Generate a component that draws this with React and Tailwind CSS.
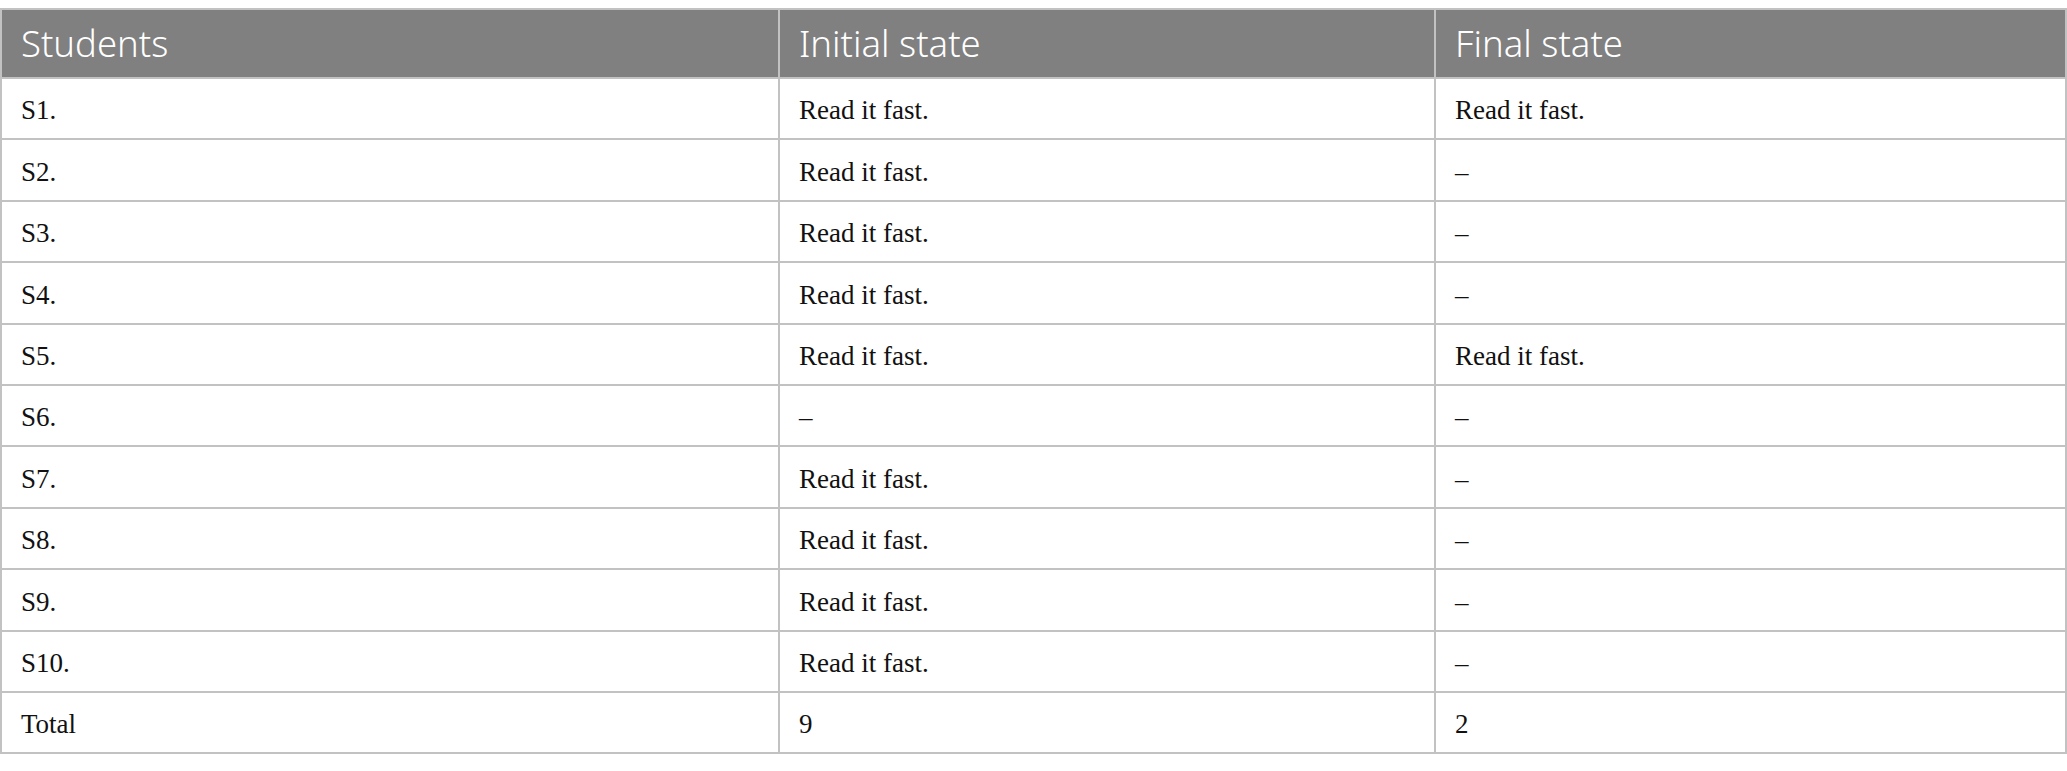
const rows = [
  ["S1.", "Read it fast.", "Read it fast."],
  ["S2.", "Read it fast.", "–"],
  ["S3.", "Read it fast.", "–"],
  ["S4.", "Read it fast.", "–"],
  ["S5.", "Read it fast.", "Read it fast."],
  ["S6.", "–", "–"],
  ["S7.", "Read it fast.", "–"],
  ["S8.", "Read it fast.", "–"],
  ["S9.", "Read it fast.", "–"],
  ["S10.", "Read it fast.", "–"],
  ["Total", "9", "2"],
];

export default function App() {
  return (
    <div className="bg-white w-[2067px] h-[771px] pt-[8px]">
      <table className="w-[2067px] table-fixed border-collapse">
        <colgroup>
          <col className="w-[778px]" />
          <col className="w-[656px]" />
          <col />
        </colgroup>
        <thead>
          <tr className="h-[69px] bg-[#808080] text-white text-left font-['Noto_Sans',sans-serif] text-[36.5px]">
            <th className="font-light pl-[19px] border-2 border-[#c2c2c2]">Students</th>
            <th className="font-light pl-[19px] border-2 border-[#c2c2c2]">Initial state</th>
            <th className="font-light pl-[19px] border-2 border-[#c2c2c2]">Final state</th>
          </tr>
        </thead>
        <tbody className="font-['Liberation_Serif',serif] text-[27px] text-[#111]">
          {rows.map((r) => (
            <tr key={r[0]} className="h-[61.4px]">
              {r.map((c, i) => (
                <td key={i} className="pl-[19px] pt-[4px] border-2 border-[#c2c2c2] align-middle">
                  {c}
                </td>
              ))}
            </tr>
          ))}
        </tbody>
      </table>
    </div>
  );
}
